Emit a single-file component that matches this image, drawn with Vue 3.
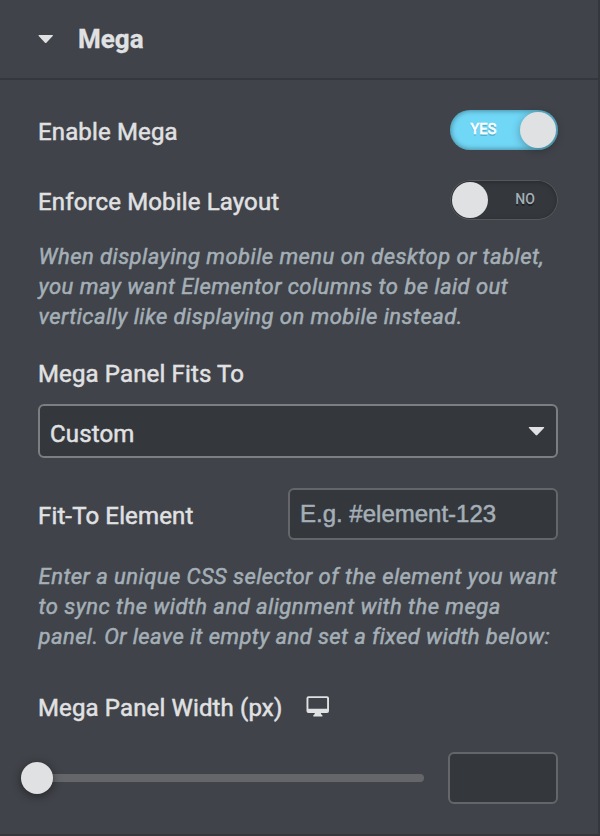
<script setup>
import { ref } from 'vue'

const enabled = ref(true)
const mobileLayout = ref(false)
const selector = ref('')
const width = ref('')
</script>

<template>
  <main class="panel">
    <header class="section-head">
      <svg class="caret" width="16" height="9" viewBox="0 0 16 9"><path d="M1 0h13.500q.9.3.2 1L8.4 7.700q-.7.6-1.400 0L.7 1Q0 .3 1 0z" /></svg>
      <h2>Mega</h2>
    </header>

    <section class="controls">
      <div class="row switch-row">
        <span class="label">Enable Mega</span>
        <button class="switch" :class="{ on: enabled }" @click="enabled = !enabled">
          <span class="state">{{ enabled ? 'YES' : 'NO' }}</span><span class="knob"></span>
        </button>
      </div>
      <div class="row switch-row">
        <span class="label">Enforce Mobile Layout</span>
        <button class="switch" :class="{ on: mobileLayout }" @click="mobileLayout = !mobileLayout">
          <span class="state">{{ mobileLayout ? 'YES' : 'NO' }}</span><span class="knob"></span>
        </button>
      </div>
      <p class="description first">When displaying mobile menu on desktop or tablet,<br>you may want Elementor columns to be laid out<br>vertically like displaying on mobile instead.</p>

      <div class="label fits">Mega Panel Fits To</div>
      <div class="select">
        <span class="label">Custom</span>
        <svg class="caret" width="18" height="10" viewBox="0 0 18 10"><path d="M1.2 0h14.600q.9.3.2 1L9.300 8.100q-.8.7-1.600 0L1 1q-.7-.7.2-1z" /></svg>
      </div>

      <div class="row fit-row">
        <span class="label">Fit-To Element</span>
        <input v-model="selector" class="field selector" placeholder="E.g. #element-123">
      </div>
      <p class="description second">Enter a unique CSS selector of the element you want<br>to sync the width and alignment with the mega<br><span class="tight">panel. Or leave it empty and set a fixed width below:</span></p>

      <div class="row width-row">
        <span class="label">Mega Panel Width (px)</span>
        <svg class="desktop" width="24" height="22" viewBox="0 0 24 22">
          <path fill-rule="evenodd" d="M2.500 0.300h18.500q2 0 2 2v12.700q0 2-2 2H14.800q0 1.400 1.600 2.200v1.400H7.300v-1.400q1.600-.8 1.600-2.200H2.500q-2 0-2-2V2.300q0-2 2-2zM2.900 2q-.5 0-.5.5v10.300h18.700V2.500q0-.5-.5-.5z" />
        </svg>
      </div>
      <div class="row slider-row">
        <div class="track"><span class="handle"></span></div>
        <input v-model="width" class="field number">
      </div>
    </section>
  </main>
</template>

<style>
body { background: #34383c; }
</style>

<style scoped>
* { box-sizing: border-box; }
.panel {
  width: 600px;
  height: 836px;
  border-right: 2px solid #34373c;
  border-bottom: 2px solid #35373c;
  background: #404349;
  color: #e0e1e3;
  font-family: Roboto, "Liberation Sans", sans-serif;
  overflow: hidden;
}
.section-head {
  display: flex;
  align-items: center;
  gap: 24px;
  height: 80px;
  padding: 0 38px;
  border-bottom: 2px solid #34373c;
}
.section-head h2 { margin: 0; font-size: 26px; line-height: 30px; font-weight: 700; -webkit-text-stroke: .3px currentColor; }
.caret, .desktop { display: block; flex: none; fill: #e0e1e3; }
.controls { padding: 30px 40px 0 38px; }
.row { display: flex; align-items: center; justify-content: space-between; }
.label {
  font-size: 24px;
  line-height: 30px;
  font-weight: 400;
  letter-spacing: .14px;
  white-space: nowrap;
  -webkit-text-stroke: .5px currentColor;
}
.switch-row { height: 40px; margin-bottom: 30px; }
.switch-row .label { padding-top: 3px; }
.switch {
  display: flex;
  align-items: center;
  flex-direction: row-reverse;
  width: 108px;
  height: 40px;
  padding: 2px;
  border: 0;
  border-radius: 20px;
  background: #34373c;
  box-shadow: inset 0 0 0 1px #56585c, inset 0 1px 5px rgba(0, 0, 0, .35);
  color: #a4afb7;
  font-family: inherit;
}
.switch.on {
  flex-direction: row;
  background: #71d7f7;
  box-shadow: inset 0 0 5px 1px rgba(0, 0, 0, .35);
  color: #fff;
}
.state {
  flex: 1;
  padding: 0 0 2px 6px;
  font-size: 14px;
  line-height: 18px;
  font-weight: 500;
  text-align: center;
  text-shadow: 0 2px #202326;
}
.switch.on .state { padding: 0 5px 0 0; letter-spacing: .2px; font-weight: 400; font-size: 14.500px; -webkit-text-stroke: .6px #fff; text-shadow: 0 2px rgba(0, 0, 0, .2); }
.knob {
  width: 36px;
  height: 36px;
  border-radius: 50%;
  background: #e0e1e3;
  box-shadow: 0 2px 10px rgba(0, 0, 0, .3);
}
.switch:not(.on) .knob { box-shadow: none; }
.description {
  margin: 0;
  color: #a4afb7;
  font-size: 22px;
  line-height: 30px;
  font-style: italic;
  letter-spacing: .45px;
  white-space: nowrap;
  padding-left: .6px;
  -webkit-text-stroke: .5px currentColor;
}
.tight { letter-spacing: .39px; }
.first { margin-top: -8px; }
.fits { margin-top: 27px; }
.select {
  display: flex;
  align-items: center;
  justify-content: space-between;
  height: 54px;
  margin-top: 15px;
  padding: 5px 10px 0;
  border: 2px solid #7d7e82;
  border-radius: 6px;
  background: #34373c;
}
.select .caret { margin-top: -4px; }
.fit-row { height: 52px; margin-top: 30px; }
.fit-row .label { padding-top: 3px; }
.field {
  height: 52px;
  padding: 0 10px;
  border: 2px solid #64666a;
  border-radius: 6px;
  outline: none;
  background: #34373c;
  color: #e0e1e3;
  font-family: "Liberation Sans", sans-serif;
  font-size: 24px;
}
.field::placeholder { color: #a4afb7; opacity: 1; -webkit-text-stroke: .5px #a4afb7; }
.selector { width: 270px; }
.second { margin-top: 22px; }
.width-row { justify-content: flex-start; gap: 24px; margin-top: 41px; height: 30px; }
.desktop { margin-top: -3px; }
.slider-row { height: 52px; margin-top: 29px; }
.track {
  display: flex;
  align-items: center;
  width: 386px;
  height: 8px;
  border-radius: 4px;
  background: #64666a;
}
.handle {
  width: 32px;
  height: 32px;
  margin-left: -17px;
  border-radius: 50%;
  background: #e0e1e3;
  box-shadow: 0 2px 10px rgba(0, 0, 0, .45);
}
.number { width: 110px; }
</style>
